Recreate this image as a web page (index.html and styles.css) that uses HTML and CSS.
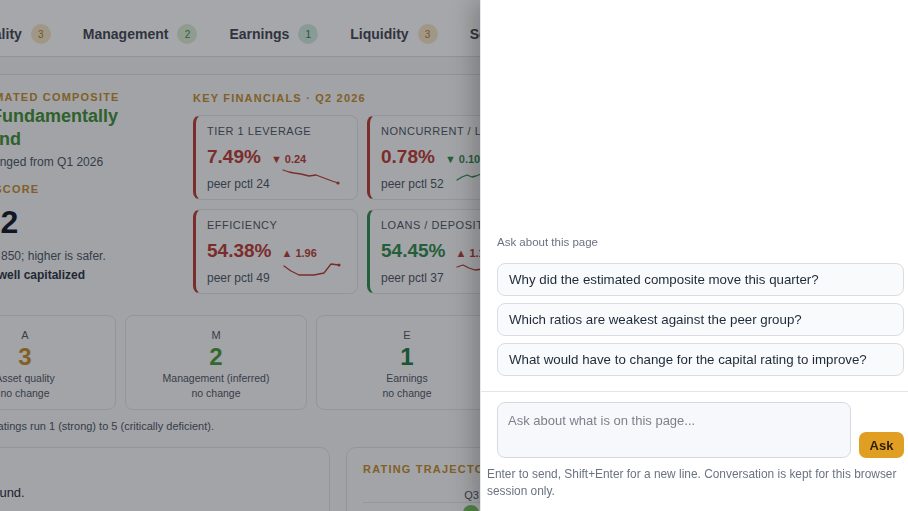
FILE: index.html
```html
<!DOCTYPE html>
<html lang="en">
<head>
<meta charset="utf-8">
<title>Bank profile · Ask about this page</title>
<link rel="stylesheet" href="styles.css">
</head>
<body>
<div class="app">
  <header class="tabbar">
    <nav class="tabs">
      <a class="tab">Capital <span class="badge b2">2</span></a>
      <a class="tab">Asset quality <span class="badge b3">3</span></a>
      <a class="tab">Management <span class="badge b2">2</span></a>
      <a class="tab">Earnings <span class="badge b1">1</span></a>
      <a class="tab">Liquidity <span class="badge b3">3</span></a>
      <a class="tab">Sensitivity <span class="badge b2">2</span></a>
    </nav>
  </header>
  <div class="subbar"></div>

  <main class="page">
    <section class="composite">
      <div class="summary">
        <p class="eyebrow">Estimated composite</p>
        <h1 class="verdict">2 · Fundamentally Sound</h1>
        <p class="muted">Unchanged from Q1 2026</p>
        <p class="eyebrow score-label">Est score</p>
        <p class="score">712</p>
        <p class="muted scale">Out of 850; higher is safer.</p>
        <p class="pca">PCA: well capitalized</p>
      </div>

      <div class="financials">
        <p class="eyebrow">Key financials · Q2 2026</p>
        <div class="kpis">
          <div class="kpi bad">
            <p class="kpi-name">Tier 1 leverage</p>
            <p class="kpi-line"><span class="val neg">7.49%</span><span class="delta neg">▼ 0.24</span></p>
            <div class="kpi-foot"><span>peer pctl 24</span>
              <svg class="spark" viewBox="0 0 58 18"><polyline class="ln neg" points="0,1 6,3 11,4 18,5 26,7 33,6 41,9 49,12 55,14"/><circle class="dot neg" cx="55" cy="14" r="1.6"/></svg>
            </div>
          </div>
          <div class="kpi bad">
            <p class="kpi-name">Noncurrent / loans</p>
            <p class="kpi-line"><span class="val neg">0.78%</span><span class="delta pos">▼ 0.10</span></p>
            <div class="kpi-foot"><span>peer pctl 52</span>
              <svg class="spark" viewBox="0 0 58 18"><polyline class="ln pos" points="0,11 5,8 10,6 15,8 19,7 24,5 30,9 38,8 46,11 55,10"/><circle class="dot pos" cx="55" cy="10" r="1.6"/></svg>
            </div>
          </div>
          <div class="kpi good">
            <p class="kpi-name">Return on assets</p>
            <p class="kpi-line"><span class="val pos">1.21%</span><span class="delta pos">▲ 0.06</span></p>
            <div class="kpi-foot"><span>peer pctl 71</span>
              <svg class="spark" viewBox="0 0 58 18"><polyline class="ln pos" points="0,12 10,11 20,9 30,10 40,6 55,4"/><circle class="dot pos" cx="55" cy="4" r="1.6"/></svg>
            </div>
          </div>
          <div class="kpi good">
            <p class="kpi-name">Net interest margin</p>
            <p class="kpi-line"><span class="val pos">3.64%</span><span class="delta pos">▲ 0.08</span></p>
            <div class="kpi-foot"><span>peer pctl 66</span>
              <svg class="spark" viewBox="0 0 58 18"><polyline class="ln pos" points="0,13 12,12 24,10 36,9 46,7 55,6"/><circle class="dot pos" cx="55" cy="6" r="1.6"/></svg>
            </div>
          </div>
          <div class="kpi bad">
            <p class="kpi-name">Efficiency</p>
            <p class="kpi-line"><span class="val neg">54.38%</span><span class="delta neg">▲ 1.96</span></p>
            <div class="kpi-foot"><span>peer pctl 49</span>
              <svg class="spark" viewBox="0 0 58 18"><polyline class="ln neg" points="1,3 8,8 16,12 24,12 31,12 41,10 48,1 56,2"/><circle class="dot neg" cx="56" cy="2" r="1.6"/></svg>
            </div>
          </div>
          <div class="kpi good">
            <p class="kpi-name">Loans / deposits</p>
            <p class="kpi-line"><span class="val pos">54.45%</span><span class="delta neg">▲ 1.12</span></p>
            <div class="kpi-foot"><span>peer pctl 37</span>
              <svg class="spark" viewBox="0 0 58 18"><polyline class="ln neg" points="0,4 6,2 12,5 18,7 26,6 34,9 44,8 55,11"/><circle class="dot neg" cx="55" cy="11" r="1.6"/></svg>
            </div>
          </div>
          <div class="kpi good">
            <p class="kpi-name">CET1 ratio</p>
            <p class="kpi-line"><span class="val pos">12.80%</span><span class="delta pos">▲ 0.15</span></p>
            <div class="kpi-foot"><span>peer pctl 58</span>
              <svg class="spark" viewBox="0 0 58 18"><polyline class="ln pos" points="0,10 14,10 28,8 42,7 55,6"/><circle class="dot pos" cx="55" cy="6" r="1.6"/></svg>
            </div>
          </div>
          <div class="kpi good">
            <p class="kpi-name">Net charge-offs</p>
            <p class="kpi-line"><span class="val pos">0.12%</span><span class="delta pos">▼ 0.03</span></p>
            <div class="kpi-foot"><span>peer pctl 63</span>
              <svg class="spark" viewBox="0 0 58 18"><polyline class="ln pos" points="0,6 14,8 28,9 42,11 55,12"/><circle class="dot pos" cx="55" cy="12" r="1.6"/></svg>
            </div>
          </div>
        </div>
      </div>
    </section>

    <section class="components">
      <div class="comp"><p class="comp-key">A</p><p class="comp-num r3">3</p><p class="comp-name">Asset quality</p><p class="comp-name">no change</p></div>
      <div class="comp"><p class="comp-key">M</p><p class="comp-num r2">2</p><p class="comp-name">Management (inferred)</p><p class="comp-name">no change</p></div>
      <div class="comp"><p class="comp-key">E</p><p class="comp-num r1">1</p><p class="comp-name">Earnings</p><p class="comp-name">no change</p></div>
      <div class="comp"><p class="comp-key">L</p><p class="comp-num r3">3</p><p class="comp-name">Liquidity</p><p class="comp-name">no change</p></div>
      <div class="comp"><p class="comp-key">S</p><p class="comp-num r2">2</p><p class="comp-name">Sensitivity</p><p class="comp-name">no change</p></div>
    </section>
    <p class="note">Component ratings run 1 (strong) to 5 (critically deficient).</p>

    <section class="lower">
      <div class="panel narrative">
        <p class="lead">Quite sound.</p>
      </div>
      <div class="panel trajectory">
        <p class="eyebrow">Rating trajectory</p>
        <div class="traj-head"><span></span><span>Q3</span><span>Q4</span><span>Q1</span><span>Q2</span></div>
        <div class="traj-row"><span></span><span><i class="pip"></i></span><span><i class="pip"></i></span><span><i class="pip"></i></span><span><i class="pip"></i></span></div>
      </div>
    </section>
  </main>
</div>

<div class="overlay"></div>

<aside class="chat">
  <div class="chat-body">
    <p class="chat-title">Ask about this page</p>
    <div class="suggestions">
      <button class="suggestion">Why did the estimated composite move this quarter?</button>
      <button class="suggestion">Which ratios are weakest against the peer group?</button>
      <button class="suggestion">What would have to change for the capital rating to improve?</button>
    </div>
  </div>
  <div class="composer">
    <div class="composer-row">
      <textarea class="input" placeholder="Ask about what is on this page..."></textarea>
      <button class="ask">Ask</button>
    </div>
    <p class="composer-note">Enter to send, Shift+Enter for a new line. Conversation is kept for this browser session only.</p>
  </div>
</aside>
</body>
</html>
```

FILE: styles.css
```css
* { box-sizing: border-box; }
html, body { margin: 0; padding: 0; }
body {
  width: 908px;
  height: 511px;
  overflow: hidden;
  background: #f4f5f7;
  font-family: "Liberation Sans", Arial, Helvetica, sans-serif;
  color: #1f2937;
}
p, h1 { margin: 0; }

/* underlying page, horizontally scrolled */
.app {
  width: 1040px;
  margin-left: -82px;
}

.tabbar {
  height: 57px;
  background: #ffffff;
  border-bottom: 1px solid #dcdfe4;
  padding-top: 12px;
  overflow: hidden;
}
.tabs {
  display: flex;
  margin-left: -107px;
  height: 44px;
  align-items: center;
}
.tab {
  display: flex;
  align-items: center;
  gap: 9px;
  padding: 0 16px;
  font-size: 14px;
  font-weight: 700;
  color: #3f4653;
  white-space: nowrap;
}
.badge {
  width: 20px;
  height: 20px;
  border-radius: 50%;
  display: flex;
  align-items: center;
  justify-content: center;
  font-size: 10px;
  font-weight: 400;
}
.b1 { background: #d2eadf; color: #2c7a55; }
.b2 { background: #dbeed5; color: #4a8b3b; }
.b3 { background: #f5e6c6; color: #b07c26; }

.subbar {
  height: 18px;
  background: #f4f5f7;
  border-bottom: 1px solid #dcdfe4;
}

.page {
  padding: 16px 16px 0;
  background: #f7f8fa;
}

.eyebrow {
  font-size: 11px;
  line-height: 12px;
  font-weight: 700;
  letter-spacing: 1.2px;
  text-transform: uppercase;
  color: #c28d2b;
}

.composite {
  display: grid;
  grid-template-columns: 243px 1fr;
  gap: 16px;
}
.summary { padding-left: 31px; }
.verdict {
  margin-top: 2px;
  font-size: 18px;
  line-height: 23px;
  font-weight: 700;
  color: #3e8e35;
}
.muted {
  font-size: 12px;
  line-height: 16px;
  color: #4b5563;
}
.verdict + .muted { margin-top: 3px; }
.score-label { margin-top: 13px; }
.score {
  margin-top: 9px;
  font-size: 32px;
  line-height: 36px;
  font-weight: 700;
  color: #111827;
}
.scale { margin-top: 7px; line-height: 19px; }
.pca {
  font-size: 12px;
  line-height: 19px;
  font-weight: 700;
  color: #2b3240;
}

.financials .eyebrow { margin-top: 1px; }
.kpis {
  margin-top: 11px;
  display: grid;
  grid-template-columns: repeat(4, 165px);
  grid-auto-rows: 85px;
  gap: 9px;
}
.kpi {
  background: #fbfbfc;
  border: 1px solid #e0e3e8;
  border-left: 3px solid #b83a33;
  border-radius: 8px;
  padding: 8px 16px 0 11px;
  overflow: hidden;
}
.kpi.good { border-left-color: #2f8a4c; }
.kpi-name {
  font-size: 11px;
  line-height: 14px;
  letter-spacing: 0.5px;
  text-transform: uppercase;
  color: #4b5563;
  white-space: nowrap;
}
.kpi-line {
  margin-top: 8px;
  display: flex;
  align-items: baseline;
  line-height: 22px;
  white-space: nowrap;
}
.val { font-size: 19px; font-weight: 700; }
.delta { margin-left: 10px; font-size: 11px; font-weight: 700; }
.neg { color: #b83a33; }
.pos { color: #2f8a4c; }
.kpi-foot {
  margin-top: -1px;
  display: flex;
  justify-content: space-between;
  align-items: flex-end;
  font-size: 12px;
  line-height: 16px;
  color: #4b5563;
}
.spark { width: 58px; height: 18px; margin-bottom: 5px; overflow: visible; }
.ln { fill: none; stroke-width: 1.3; stroke-linejoin: round; stroke-linecap: round; }
.ln.neg { stroke: #b83a33; }
.ln.pos { stroke: #2f8a4c; }
.dot.neg { fill: #b83a33; }
.dot.pos { fill: #2f8a4c; }

.components {
  margin-top: 21px;
  display: grid;
  grid-template-columns: repeat(5, 182px);
  gap: 9px;
}
.comp {
  height: 95px;
  background: #fbfbfc;
  border: 1px solid #e0e3e8;
  border-radius: 8px;
  padding-top: 12px;
  text-align: center;
}
.comp-key { font-size: 11px; line-height: 14px; color: #4b5563; }
.comp-num { margin-top: 1px; font-size: 24px; line-height: 28px; font-weight: 700; }
.r1 { color: #1f7a45; }
.r2 { color: #4a9a3a; }
.r3 { color: #c28d2b; }
.comp-name { font-size: 10.5px; line-height: 15px; color: #4b5563; }

.note {
  margin-top: 9px;
  font-size: 11px;
  line-height: 14px;
  color: #4b5563;
}

.lower {
  margin-top: 14px;
  display: grid;
  grid-template-columns: 396px 534px;
  gap: 16px;
}
.panel {
  height: 140px;
  background: #fbfbfc;
  border: 1px solid #e0e3e8;
  border-radius: 10px;
  padding: 15px 16px;
}
.lead {
  margin-top: 21px;
  font-size: 13px;
  line-height: 18px;
  color: #1f2937;
}
.traj-head, .traj-row {
  display: grid;
  grid-template-columns: 46px repeat(4, 70px);
  justify-items: end;
}
.traj-head {
  margin-top: 13px;
  padding-bottom: 0;
  border-bottom: 1px solid #e3e6ea;
  font-size: 11px;
  line-height: 14px;
  color: #4b5563;
}
.traj-row { padding-top: 2px; }
.pip {
  display: block;
  width: 16px;
  height: 16px;
  border-radius: 50%;
  background: #6fbf5a;
}

/* dim layer over the page */
.overlay {
  position: fixed;
  inset: 0;
  background: rgba(20, 24, 32, 0.38);
}

/* side panel */
.chat {
  position: fixed;
  top: 0;
  right: 0;
  bottom: 0;
  width: 428px;
  background: #ffffff;
  border-left: 1px solid #e6e8ec;
  box-shadow: -8px 0 22px rgba(0, 0, 0, 0.22);
  display: flex;
  flex-direction: column;
}
.chat-body {
  flex: 1;
  display: flex;
  flex-direction: column;
  justify-content: flex-end;
  padding: 0 4px 15px 16px;
}
.chat-title {
  font-size: 11.5px;
  line-height: 14px;
  color: #6b7280;
}
.suggestions {
  margin-top: 14px;
  display: flex;
  flex-direction: column;
  gap: 7px;
}
.suggestion {
  height: 33px;
  padding: 0 11px;
  text-align: left;
  font-family: inherit;
  font-size: 13.3px;
  color: #1f2937;
  background: #f8fafc;
  border: 1px solid #d9dde3;
  border-radius: 8px;
}
.composer {
  border-top: 1px solid #e3e6ea;
  padding: 10px 4px 11px 6px;
}
.composer-row {
  display: flex;
  align-items: flex-end;
  gap: 8px;
  padding-left: 10px;
}
.input {
  flex: 1;
  height: 56px;
  resize: none;
  padding: 10px 10px;
  font-family: inherit;
  font-size: 13px;
  line-height: 16px;
  color: #1f2937;
  background: #f6f8fb;
  border: 1px solid #d6dae0;
  border-radius: 8px;
}
.input::placeholder { color: #7c828c; }
.ask {
  width: 45px;
  height: 26px;
  font-family: inherit;
  font-size: 13px;
  font-weight: 700;
  color: #2d1f06;
  background: #e09f22;
  border: none;
  border-radius: 7px;
}
.composer-note {
  margin-top: 8px;
  font-size: 11.9px;
  line-height: 17px;
  color: #6b7280;
}
```
